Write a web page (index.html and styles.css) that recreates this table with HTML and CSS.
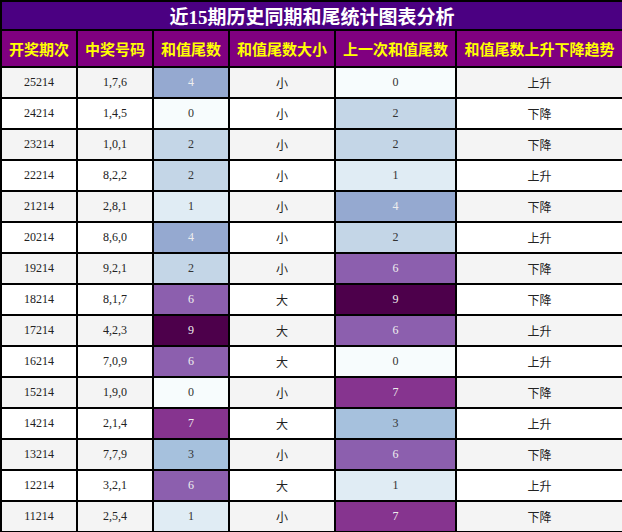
FILE: index.html
```html
<!DOCTYPE html>
<html lang="zh">
<head>
<meta charset="utf-8">
<title>近15期历史同期和尾统计图表分析</title>
<link rel="stylesheet" href="styles.css">
</head>
<body>
<table class="stats">
  <colgroup>
    <col class="c1"><col class="c2"><col class="c3"><col class="c4"><col class="c5"><col class="c6">
  </colgroup>
  <thead>
    <tr class="title-row"><th colspan="6">近15期历史同期和尾统计图表分析</th></tr>
    <tr class="head-row">
      <th>开奖期次</th><th>中奖号码</th><th>和值尾数</th><th>和值尾数大小</th><th>上一次和值尾数</th><th>和值尾数上升下降趋势</th>
    </tr>
  </thead>
  <tbody>
    <tr><td>25214</td><td>1,7,6</td><td class="v4">4</td><td class="cn">小</td><td class="v0">0</td><td class="cn">上升</td></tr>
    <tr><td>24214</td><td>1,4,5</td><td class="v0">0</td><td class="cn">小</td><td class="v2">2</td><td class="cn">下降</td></tr>
    <tr><td>23214</td><td>1,0,1</td><td class="v2">2</td><td class="cn">小</td><td class="v2">2</td><td class="cn">下降</td></tr>
    <tr><td>22214</td><td>8,2,2</td><td class="v2">2</td><td class="cn">小</td><td class="v1">1</td><td class="cn">上升</td></tr>
    <tr><td>21214</td><td>2,8,1</td><td class="v1">1</td><td class="cn">小</td><td class="v4">4</td><td class="cn">下降</td></tr>
    <tr><td>20214</td><td>8,6,0</td><td class="v4">4</td><td class="cn">小</td><td class="v2">2</td><td class="cn">上升</td></tr>
    <tr><td>19214</td><td>9,2,1</td><td class="v2">2</td><td class="cn">小</td><td class="v6">6</td><td class="cn">下降</td></tr>
    <tr><td>18214</td><td>8,1,7</td><td class="v6">6</td><td class="cn">大</td><td class="v9">9</td><td class="cn">下降</td></tr>
    <tr><td>17214</td><td>4,2,3</td><td class="v9">9</td><td class="cn">大</td><td class="v6">6</td><td class="cn">上升</td></tr>
    <tr><td>16214</td><td>7,0,9</td><td class="v6">6</td><td class="cn">大</td><td class="v0">0</td><td class="cn">上升</td></tr>
    <tr><td>15214</td><td>1,9,0</td><td class="v0">0</td><td class="cn">小</td><td class="v7">7</td><td class="cn">下降</td></tr>
    <tr><td>14214</td><td>2,1,4</td><td class="v7">7</td><td class="cn">大</td><td class="v3">3</td><td class="cn">上升</td></tr>
    <tr><td>13214</td><td>7,7,9</td><td class="v3">3</td><td class="cn">小</td><td class="v6">6</td><td class="cn">下降</td></tr>
    <tr><td>12214</td><td>3,2,1</td><td class="v6">6</td><td class="cn">大</td><td class="v1">1</td><td class="cn">上升</td></tr>
    <tr><td>11214</td><td>2,5,4</td><td class="v1">1</td><td class="cn">小</td><td class="v7">7</td><td class="cn">下降</td></tr>
  </tbody>
</table>
</body>
</html>
```

FILE: styles.css
```css
html, body {
  margin: 0;
  padding: 0;
  background: #ffffff;
}

.stats {
  width: 622px;
  border-collapse: collapse;
  table-layout: fixed;
  font-family: "Liberation Serif", "Noto Sans CJK SC", serif;
  color: #222;
}

.c1, .c2, .c3 { width: 76px; }
.c4 { width: 106px; }
.c5 { width: 121px; }
.c6 { width: 167px; }

.stats th, .stats td {
  border: 2px solid #000;
  text-align: center;
  padding: 0;
}

.title-row th {
  background: #4b0082;
  color: #ffffff;
  height: 27px;
  font-size: 19px;
  font-weight: bold;
  font-family: "Liberation Serif", "Noto Sans CJK SC", serif;
}

.head-row th {
  background: #800080;
  color: #ffff00;
  height: 35px;
  font-size: 15px;
  font-weight: bold;
  font-family: "Noto Sans CJK SC", sans-serif;
}

.stats td {
  height: 29px;
  font-size: 12px;
}

.stats tbody tr:nth-child(odd) td { background: #f4f4f4; }
.stats tbody tr:nth-child(even) td { background: #ffffff; }

.stats td.cn {
  font-family: "Noto Sans CJK SC", sans-serif;
  font-size: 12px;
}

.stats tbody tr td.v0 { background: #f7fcfd; color: #333; }
.stats tbody tr td.v1 { background: #e0ecf4; color: #333; }
.stats tbody tr td.v2 { background: #c4d6e7; color: #333; }
.stats tbody tr td.v3 { background: #a6c1dd; color: #333; }
.stats tbody tr td.v4 { background: #95a9d0; color: #eeeeee; }
.stats tbody tr td.v6 { background: #8c5fae; color: #eeeeee; }
.stats tbody tr td.v7 { background: #86348f; color: #eeeeee; }
.stats tbody tr td.v9 { background: #4d004b; color: #eeeeee; }
```
